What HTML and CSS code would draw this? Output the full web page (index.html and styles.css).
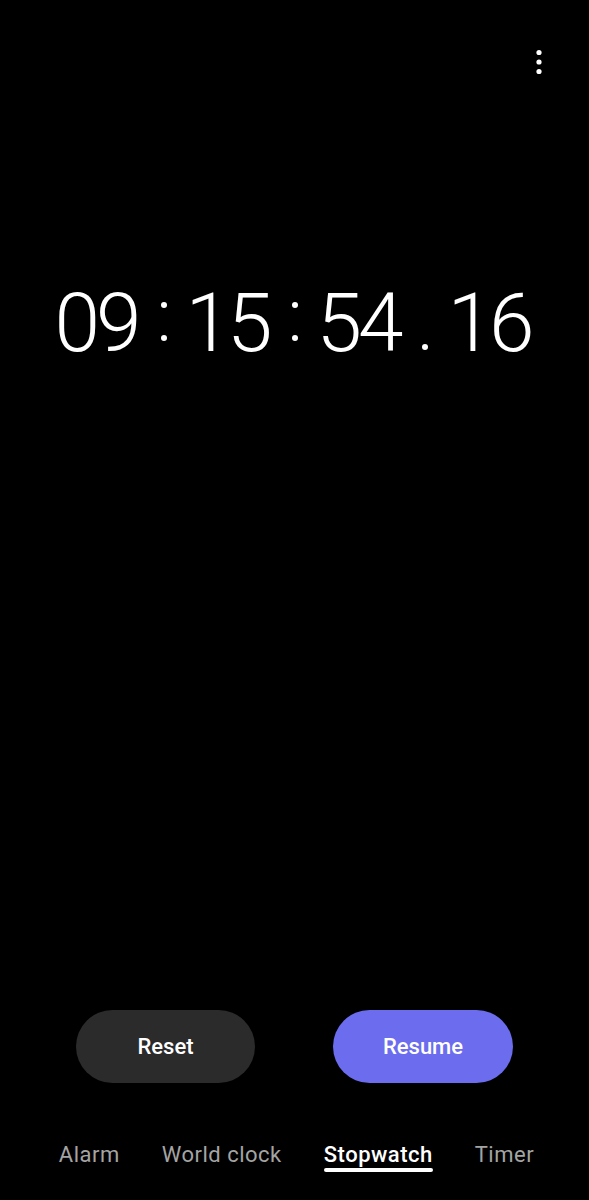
FILE: index.html
```html
<!DOCTYPE html>
<html lang="en">
<head>
<meta charset="utf-8">
<title>Stopwatch</title>
<link rel="stylesheet" href="styles.css">
</head>
<body>
<div class="app">
  <header class="topbar">
    <button class="menu" aria-label="More options">
      <svg width="8" height="26" viewBox="0 0 8 26"><circle cx="4" cy="3.5" r="2.6" fill="#fff"/><circle cx="4" cy="13" r="2.6" fill="#fff"/><circle cx="4" cy="22.5" r="2.6" fill="#fff"/></svg>
    </button>
  </header>

  <div class="display">
    <span class="num">09</span>
    <span class="sep colon"><i></i><i></i></span>
    <span class="num">15</span>
    <span class="sep colon"><i></i><i></i></span>
    <span class="num">54</span>
    <span class="sep period"><i></i></span>
    <span class="num">16</span>
  </div>

  <div class="spacer"></div>

  <div class="actions">
    <button class="btn btn-reset">Reset</button>
    <button class="btn btn-resume">Resume</button>
  </div>

  <nav class="tabs">
    <div class="tab"><span class="label">Alarm</span><span class="bar"></span></div>
    <div class="tab"><span class="label">World clock</span><span class="bar"></span></div>
    <div class="tab active"><span class="label">Stopwatch</span><span class="bar"></span></div>
    <div class="tab"><span class="label">Timer</span><span class="bar"></span></div>
  </nav>
</div>
</body>
</html>
```

FILE: styles.css
```css
* { box-sizing: border-box; }
html, body {
  margin: 0;
  padding: 0;
  background: #000;
}
body {
  font-family: Roboto, "Noto Sans", "Liberation Sans", sans-serif;
  color: #fff;
}
.app {
  width: 589px;
  height: 1200px;
  display: flex;
  flex-direction: column;
  padding-bottom: 28px;
}
.topbar {
  display: flex;
  justify-content: flex-end;
  padding: 49px 46px 0 0;
  height: 282px;
}
.menu {
  background: none;
  border: 0;
  padding: 0;
  width: 8px;
  height: 26px;
  display: block;
}
.menu svg { display: block; }

.display {
  display: flex;
  justify-content: center;
  align-items: flex-start;
  font-size: 82px;
  font-weight: 300;
  line-height: 82px;
  height: 82px;
}
.num {
  letter-spacing: -4px;
  margin-right: 4px;
}
.sep {
  position: relative;
  width: 6px;
  height: 82px;
  margin: 0 19px;
  display: block;
}
.sep i {
  position: absolute;
  left: 0;
  width: 6px;
  height: 6px;
  border-radius: 50%;
  background: #fff;
}
.colon i:first-child { top: 20px; }
.colon i:last-child { top: 53px; }
.period i { top: 62px; }

.spacer { flex: 1; }

.actions {
  display: flex;
  justify-content: center;
  gap: 78px;
}
.btn {
  width: 179px;
  height: 73px;
  border: 0;
  border-radius: 37px;
  font-family: Roboto, "Noto Sans", "Liberation Sans", sans-serif;
  font-size: 22px;
  font-weight: 500;
  color: #fff;
}
.btn-reset { background: #2b2b2b; }
.btn-resume { background: #6b6cee; width: 180px; }

.tabs {
  display: flex;
  justify-content: center;
  gap: 42px;
  margin-top: 60px;
  padding-left: 4px;
}
.tab {
  display: flex;
  flex-direction: column;
  align-items: stretch;
  font-size: 22px;
  letter-spacing: 0.5px;
  line-height: 24px;
  color: #a4a4a4;
}
.tab .bar {
  display: block;
  height: 4px;
  margin-top: 1px;
  border-radius: 2px;
  background: transparent;
}
.tab.active { color: #fff; font-weight: 500; }
.tab.active .bar { background: #fff; }
```
